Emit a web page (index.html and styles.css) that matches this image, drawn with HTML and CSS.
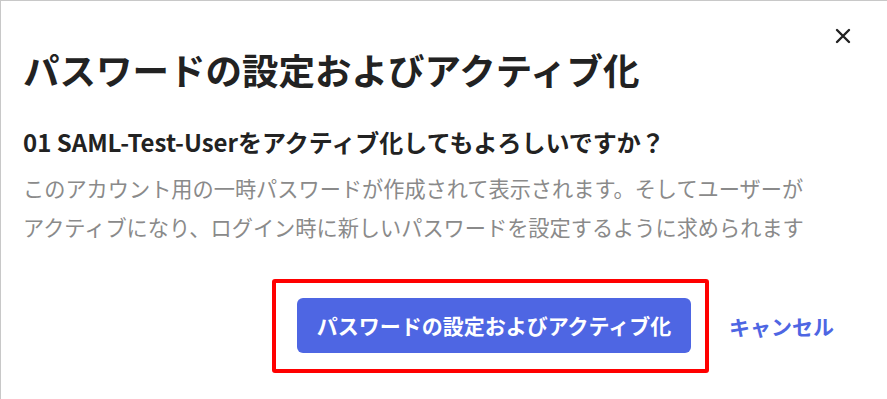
FILE: index.html
```html
<!DOCTYPE html>
<html lang="ja">
<head>
	<meta charset="UTF-8">
	<title>パスワードの設定およびアクティブ化</title>
	<link rel="stylesheet" href="styles.css">
</head>
<body>
	<div class="dialog">
		<div class="close">
			<svg width="16" height="16" viewBox="0 0 16 16"><path d="M2 2L14 14M14 2L2 14" stroke="#222" stroke-width="2.4" stroke-linecap="round"/></svg>
		</div>
		<h1 class="title">パスワードの設定およびアクティブ化</h1>
		<h2 class="question">01 SAML-Test-Userをアクティブ化してもよろしいですか？</h2>
		<p class="desc">このアカウント用の一時パスワードが作成されて表示されます。そしてユーザーが<br>アクティブになり、ログイン時に新しいパスワードを設定するように求められます</p>
		<div class="actions">
			<div class="highlight">
				<div class="btn_primary">パスワードの設定およびアクティブ化</div>
			</div>
			<div class="btn_link">キャンセル</div>
		</div>
	</div>
</body>
</html>
```

FILE: styles.css
```css
*{
	margin: 0;
	padding: 0;
	box-sizing: border-box;
}
html, body{
	width: 887px;
	height: 399px;
	overflow: hidden;
	background: #fff;
}
body{
	font-family: "Noto Sans CJK JP", "Noto Sans", sans-serif;
	color: #222;
}
.dialog{
	position: relative;
	height: 399px;
	border-top: 1px solid #c8c8c8;
	border-left: 1px solid #c8c8c8;
	padding: 47px 0 0 22px;
}
.close{
	position: absolute;
	top: 27px;
	right: 36px;
	width: 16px;
	height: 16px;
}
.close svg{
	display: block;
}
.title{
	font-size: 36.5px;
	line-height: 44px;
	font-weight: 700;
}
.question{
	margin-top: 34px;
	font-size: 24px;
	line-height: 32px;
	font-weight: 700;
}
.desc{
	margin-top: 10px;
	font-size: 21.2px;
	line-height: 39px;
	color: #8a8a8a;
}
.actions{
	display: flex;
	align-items: center;
	justify-content: flex-end;
	gap: 20px;
	margin-top: 33px;
	padding-right: 53px;
}
.highlight{
	border: 4px solid #f00;
	border-radius: 3px;
	padding: 15px 14px 16px 21px;
}
.btn_primary{
	width: 394px;
	height: 55px;
	line-height: 55px;
	text-align: center;
	background-color: #4e66e3;
	color: #fff;
	border-radius: 6px;
	font-size: 21px;
	font-weight: 700;
}
.btn_link{
	color: #4e66e3;
	font-size: 21px;
	font-weight: 700;
}
```
